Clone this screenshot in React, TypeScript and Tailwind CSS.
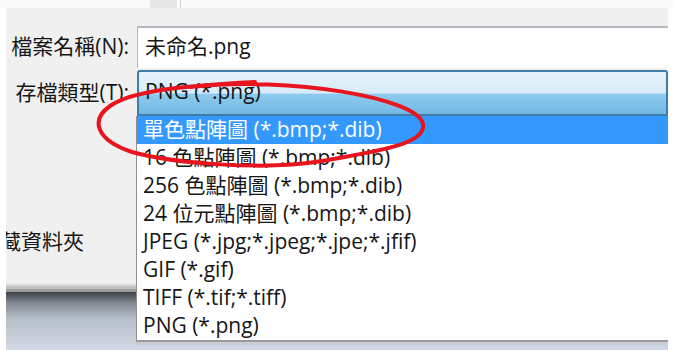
import React from 'react';

const fileTypes = [
  '單色點陣圖 (*.bmp;*.dib)',
  '16 色點陣圖 (*.bmp;*.dib)',
  '256 色點陣圖 (*.bmp;*.dib)',
  '24 位元點陣圖 (*.bmp;*.dib)',
  'JPEG (*.jpg;*.jpeg;*.jpe;*.jfif)',
  'GIF (*.gif)',
  'TIFF (*.tif;*.tiff)',
  'PNG (*.png)',
];

export default function App() {
  return (
    <div
      className="relative w-[674px] h-[350px] bg-white flex flex-col overflow-hidden text-[21px] text-[#161616]"
      style={{ fontFamily: '"Open Sans", "Noto Sans CJK TC", sans-serif' }}
    >
      {/* strip of the file list above */}
      <div className="h-[8px] flex bg-[#fafafa]">
        <div className="ml-[150px] w-[27px] bg-[#e6e6e6]" />
        <div className="ml-[3px] w-[1px] bg-[#d2d2d2]" />
      </div>

      <div className="relative flex-1 mx-[6px] bg-[#f0f0f0] flex flex-col overflow-hidden">
        {/* file name */}
        <div className="mt-[18px] h-[42px] flex">
          <div className="w-[131px] shrink-0 flex items-center justify-end pr-[8px] whitespace-nowrap">
            檔案名稱(N):
          </div>
          <div className="flex-1 bg-white border-t-2 border-l border-[#b5b8be] flex items-center pl-[7px] pb-[2px]">
            未命名.png
          </div>
        </div>

        {/* save type */}
        <div className="mt-[2px] h-[46px] flex">
          <div className="w-[131px] shrink-0 flex items-center justify-end pr-[8px] whitespace-nowrap">
            存檔類型(T):
          </div>
          <div className="flex-1 border-2 border-[#3f7ca6] rounded-t-[3px] bg-[linear-gradient(to_bottom,#e6f3fc_0%,#d7ebf8_50%,#8ecbee_53%,#72b9e4_100%)] flex items-center pl-[6px] pb-[3px]">
            PNG (*.png)
          </div>
        </div>

        <div className="mt-[112px] h-[28px] flex items-center ml-[-27px] whitespace-nowrap">
          隱藏資料夾
        </div>

        <div className="flex-1" />

        {/* footer */}
        <div className="h-[66px] flex flex-col">
          <div className="h-[2px] bg-[#dadada]" />
          <div className="h-[3px] bg-[#c2c2c2]" />
          <div className="h-[3px] bg-[#9c9c9c]" />
          <div className="flex-1 bg-[linear-gradient(to_bottom,#3b4047_0%,#7f868f_18%,#b6bec9_45%,#d3dae5_100%)]" />
        </div>

        {/* open dropdown list */}
        <div className="absolute left-[130px] right-0 top-[108px] flex flex-col">
          <div className="bg-white border-l border-[#8f8f8f] flex flex-col">
            {fileTypes.map((t, i) => (
              <div
                key={t}
                className={
                  i === 0
                    ? 'h-[28px] flex items-center pl-[6px] bg-[#3399ff] text-white whitespace-nowrap'
                    : 'h-[28px] flex items-center pl-[6px] whitespace-nowrap'
                }
              >
                {t}
              </div>
            ))}
          </div>
          <div className="h-[2px] bg-[#9a9a9a]" />
          <div className="h-[3px] bg-[#c9ced6]" />
        </div>
      </div>

      {/* red annotation */}
      <svg className="absolute inset-0 pointer-events-none" width="674" height="350" viewBox="0 0 674 350">
        <path
          d="M 190 87 C 290 76, 418 98, 423 124 C 427 145, 372 152, 322 161 C 262 171, 172 163, 132 152 C 96 140, 90 120, 110 106 C 130 92, 175 86, 255 82"
          fill="none"
          stroke="#e8141e"
          strokeWidth="4"
          strokeLinecap="round"
        />
      </svg>
    </div>
  );
}
